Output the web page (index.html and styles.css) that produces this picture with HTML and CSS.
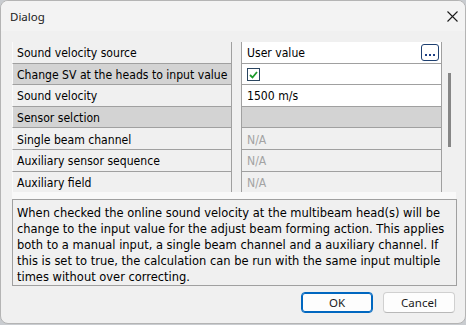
FILE: index.html
```html
<!DOCTYPE html>
<html lang="en">
<head>
    <meta charset="UTF-8">
    <meta name="viewport" content="width=device-width, initial-scale=1.0">
    <title>Dialog</title>
    <link rel="stylesheet" href="styles.css">
</head>
<body>
    <div class="window">
        <div class="titlebar">
            <span class="title">Dialog</span>
            <span class="close">
                <svg width="11" height="11" viewBox="0 0 11 11">
                    <path d="M0.5 0.5L10.5 10.5M10.5 0.5L0.5 10.5" stroke="#1b1b1b" stroke-width="1.1"/>
                </svg>
            </span>
        </div>

        <div class="content">
            <div class="grid-area">
                <div class="grid">
                    <div class="row">
                        <div class="name">Sound velocity source</div>
                        <div class="gap"></div>
                        <div class="value edit">
                            <span>User value</span>
                            <span class="dots">
                                <svg width="10" height="3" viewBox="0 0 10 3">
                                    <rect x="0" y="0" width="2" height="2" fill="#1d3f86"/>
                                    <rect x="4" y="0" width="2" height="2" fill="#1d3f86"/>
                                    <rect x="8" y="0" width="2" height="2" fill="#1d3f86"/>
                                </svg>
                            </span>
                        </div>
                    </div>
                    <div class="row">
                        <div class="name selected">Change SV at the heads to input value</div>
                        <div class="gap"></div>
                        <div class="value edit">
                            <span class="check">
                                <svg width="9" height="8" viewBox="0 0 9 8">
                                    <path d="M1 4L3.5 6.5L8 1" stroke="#1e9a2c" stroke-width="1.8" fill="none"/>
                                </svg>
                            </span>
                        </div>
                    </div>
                    <div class="row">
                        <div class="name">Sound velocity</div>
                        <div class="gap"></div>
                        <div class="value edit">1500 m/s</div>
                    </div>
                    <div class="row category">
                        <div class="name">Sensor selction</div>
                        <div class="gap"></div>
                        <div class="value"></div>
                    </div>
                    <div class="row">
                        <div class="name">Single beam channel</div>
                        <div class="gap"></div>
                        <div class="value disabled">N/A</div>
                    </div>
                    <div class="row">
                        <div class="name">Auxiliary sensor sequence</div>
                        <div class="gap"></div>
                        <div class="value disabled">N/A</div>
                    </div>
                    <div class="row">
                        <div class="name">Auxiliary field</div>
                        <div class="gap"></div>
                        <div class="value disabled">N/A</div>
                    </div>
                </div>
                <div class="scrollbar"><div class="thumb"></div></div>
            </div>

            <div class="splitter"></div>

            <div class="help">
                When checked the online sound velocity at the multibeam head(s) will be<br>
                change to the input value for the adjust beam forming action. This applies<br>
                both to a manual input, a single beam channel and a auxiliary channel. If<br>
                this is set to true, the calculation can be run with the same input multiple<br>
                times without over correcting.
            </div>

            <div class="buttons">
                <button class="btn btn-default">OK</button>
                <button class="btn">Cancel</button>
            </div>
        </div>
    </div>
</body>
</html>
```

FILE: styles.css
```css
body {
    margin: 0;
    padding: 0;
    width: 466px;
    height: 325px;
    overflow: hidden;
    background: #c9ccd0;
    font-family: 'DejaVu Sans Condensed', 'DejaVu Sans', sans-serif;
    font-stretch: condensed;
    color: #000;
}

.window {
    height: 324px;
    box-sizing: border-box;
    background: #f0f0f0;
    border: 1px solid #b4b4b4;
    border-radius: 8px;
    overflow: hidden;
    display: flex;
    flex-direction: column;
}

.titlebar {
    height: 30px;
    background: #f3f3f3;
    display: flex;
    align-items: center;
    justify-content: space-between;
    padding: 0 7px 0 9px;
}

.title {
    font-family: 'Noto Sans', sans-serif;
    font-stretch: normal;
    font-size: 11.5px;
    color: #1a1a1a;
}

.close {
    display: flex;
    width: 11px;
    height: 11px;
}

.content {
    flex: 1;
    padding: 11px 8px 0 11px;
    display: flex;
    flex-direction: column;
}

.grid-area {
    height: 150px;
    display: flex;
    overflow: hidden;
}

.grid {
    width: 430px;
}

.row {
    display: grid;
    grid-template-columns: 220px 9px 201px;
    height: 21.6px;
    font-size: 12.1px;
}

.name,
.value {
    box-sizing: border-box;
    display: flex;
    align-items: center;
    padding-top: 2px;
    border-bottom: 1px solid #a0a0a0;
    white-space: nowrap;
    overflow: hidden;
}

.name {
    padding-left: 4px;
    border-left: 1px solid #fafafa;
    border-right: 1px solid #a0a0a0;
    background: #f0f0f0;
}

.name.selected {
    background: #d3d3d3;
}

.value {
    padding-left: 5px;
    border-left: 1px solid #a0a0a0;
    border-right: 1px solid #a0a0a0;
    background: #f0f0f0;
}

.value.edit {
    background: #fff;
}

.value.disabled {
    color: #a3a3a3;
}

.category .name,
.category .value {
    background: #d3d3d3;
}

.edit {
    justify-content: space-between;
    padding-right: 2px;
}

.dots {
    box-sizing: border-box;
    width: 18px;
    height: 17px;
    margin-top: -1px;
    border: 1px solid #1d3f70;
    border-radius: 3px;
    background: #fff;
    display: flex;
    align-items: flex-end;
    justify-content: center;
    padding-bottom: 3px;
}

.check {
    box-sizing: border-box;
    width: 13px;
    height: 13px;
    border: 1px solid #2a4560;
    display: flex;
    align-items: center;
    justify-content: center;
    background: #fff;
}

.scrollbar {
    flex: 1;
    position: relative;
}

.thumb {
    position: absolute;
    left: 6px;
    top: 31px;
    width: 3px;
    height: 74px;
    background: #868686;
}

.splitter {
    height: 7px;
    margin-right: 1px;
    background: #f9f9f9;
}

.help {
    height: 87px;
    box-sizing: border-box;
    border: 1px solid #a0a0a0;
    padding: 5px 4px 0 4px;
    font-size: 12.75px;
    line-height: 16px;
    white-space: nowrap;
    overflow: hidden;
}

.buttons {
    display: flex;
    justify-content: flex-end;
    gap: 10px;
    margin-top: 6px;
    padding-right: 2px;
}

.btn {
    width: 72px;
    height: 21px;
    padding: 0;
    border: 1px solid #d0d0d0;
    border-bottom-color: #b8b8b8;
    border-radius: 4px;
    background: #fdfdfd;
    font-family: 'Noto Sans', sans-serif;
    font-stretch: normal;
    font-size: 11.5px;
    color: #1a1a1a;
}

.btn-default {
    border: 1px solid #0067c0;
    box-shadow: inset 0 0 0 1px #0067c0;
}
```
